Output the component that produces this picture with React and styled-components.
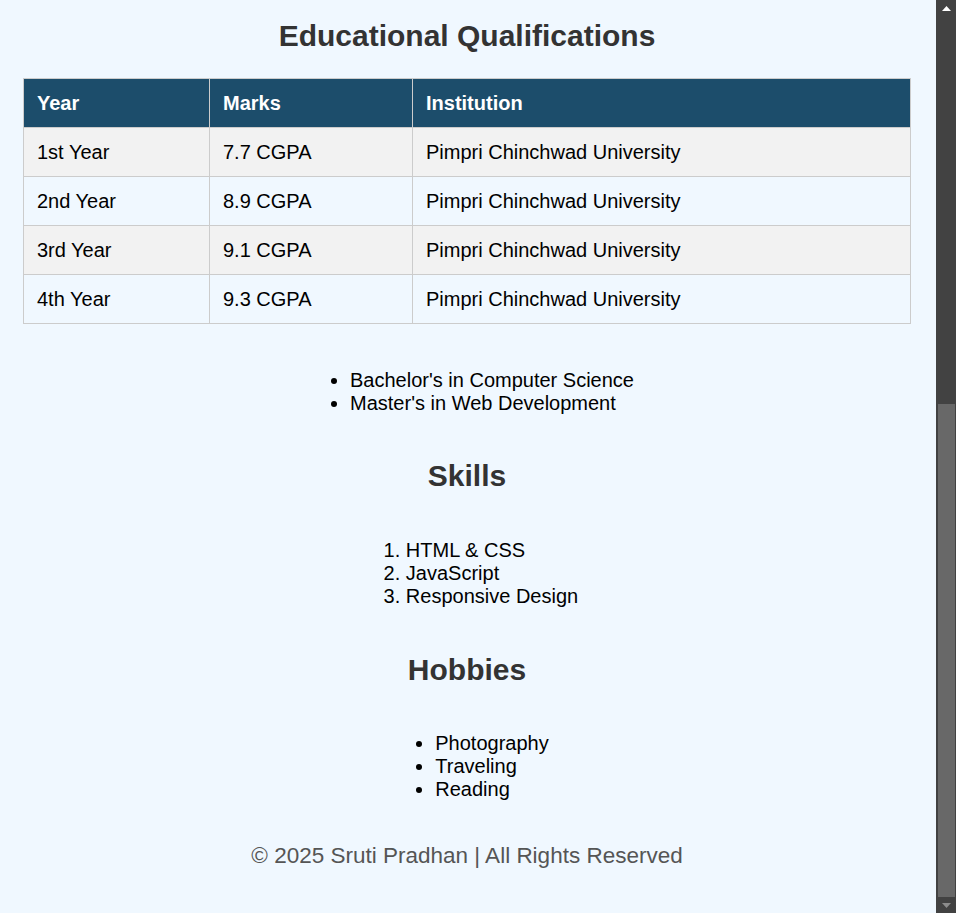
import React from "react";
import styled, { createGlobalStyle } from "styled-components";

const GlobalStyle = createGlobalStyle`
  html, body {
    scrollbar-width: none;
  }
  body {
    margin: 0;
    background: #f0f8ff;
    font-family: "Liberation Sans", Arial, sans-serif;
    font-size: 20px;
    color: #000;
  }
`;

const Page = styled.main`
  display: flex;
  flex-direction: column;
  padding: 19px 45px 45px 23px;
`;

const Heading = styled.h2`
  margin: ${(p) => p.$top || "0"} 0 0;
  font-size: 30px;
  line-height: 34px;
  font-weight: bold;
  color: #333;
  text-align: center;
`;

const Table = styled.table`
  margin-top: 25px;
  width: 100%;
  border-collapse: collapse;
  table-layout: fixed;
`;

const HeadCell = styled.th`
  box-sizing: border-box;
  width: ${(p) => p.$w || "auto"};
  background: #1c4d6b;
  color: #fff;
  font-weight: bold;
  text-align: left;
  padding: 12px 11px 12px 13px;
  line-height: 24px;
  border: 1px solid #ccc;
`;

const Row = styled.tr`
  background: ${(p) => (p.$odd ? "#f2f2f2" : "transparent")};
`;

const Cell = styled.td`
  padding: 12px 11px 12px 13px;
  line-height: 24px;
  border: 1px solid #ccc;
`;

const List = styled.ul`
  margin: ${(p) => p.$top || "45px"} auto 0;
  padding: 0 0 0 50px;
  width: fit-content;
  line-height: 23px;
  list-style: ${(p) => (p.$ordered ? "decimal" : "disc")};
`;

const Footer = styled.footer`
  margin-top: 42px;
  text-align: center;
  font-size: 22.5px;
  color: #555;
`;

/* Drawing of the browser's classic scrollbar, scrolled to the bottom */
const ScrollTrack = styled.div`
  position: fixed;
  top: 0;
  right: 0;
  bottom: 0;
  width: 20px;
  background: #424242;
  display: flex;
  flex-direction: column;
  align-items: flex-end;
`;

const Arrow = styled.div`
  height: 16px;
  width: 20px;
  display: flex;
  justify-content: center;
  align-items: center;
  flex: none;
`;

const Thumb = styled.div`
  margin-top: 388px;
  width: 17px;
  margin-right: 1px;
  flex: 1;
  background: #686868;
`;

const rows = [
  ["1st Year", "7.7 CGPA", "Pimpri Chinchwad University"],
  ["2nd Year", "8.9 CGPA", "Pimpri Chinchwad University"],
  ["3rd Year", "9.1 CGPA", "Pimpri Chinchwad University"],
  ["4th Year", "9.3 CGPA", "Pimpri Chinchwad University"],
];

export default function App() {
  return (
    <>
      <GlobalStyle />
      <Page>
        <Heading>Educational Qualifications</Heading>
        <Table>
          <thead>
            <tr>
              <HeadCell $w="186px">Year</HeadCell>
              <HeadCell $w="203px">Marks</HeadCell>
              <HeadCell>Institution</HeadCell>
            </tr>
          </thead>
          <tbody>
            {rows.map((r, i) => (
              <Row key={r[0]} $odd={i % 2 === 0}>
                {r.map((c) => (
                  <Cell key={c}>{c}</Cell>
                ))}
              </Row>
            ))}
          </tbody>
        </Table>

        <List $top="45px">
          <li>Bachelor's in Computer Science</li>
          <li>Master's in Web Development</li>
        </List>

        <Heading $top="44px">Skills</Heading>
        <List as="ol" $ordered $top="46px">
          <li>HTML &amp; CSS</li>
          <li>JavaScript</li>
          <li>Responsive Design</li>
        </List>

        <Heading $top="45px">Hobbies</Heading>
        <List $top="45px">
          <li>Photography</li>
          <li>Traveling</li>
          <li>Reading</li>
        </List>

        <Footer>© 2025 Sruti Pradhan | All Rights Reserved</Footer>
      </Page>

      <ScrollTrack aria-hidden="true">
        <Arrow>
          <svg width="9" height="5" viewBox="0 0 9 5">
            <path d="M0 5 L4.5 0 L9 5 Z" fill="#ffffff" />
          </svg>
        </Arrow>
        <Thumb />
        <Arrow>
          <svg width="9" height="5" viewBox="0 0 9 5">
            <path d="M0 0 L4.5 5 L9 0 Z" fill="#8c8c8c" />
          </svg>
        </Arrow>
      </ScrollTrack>
    </>
  );
}
